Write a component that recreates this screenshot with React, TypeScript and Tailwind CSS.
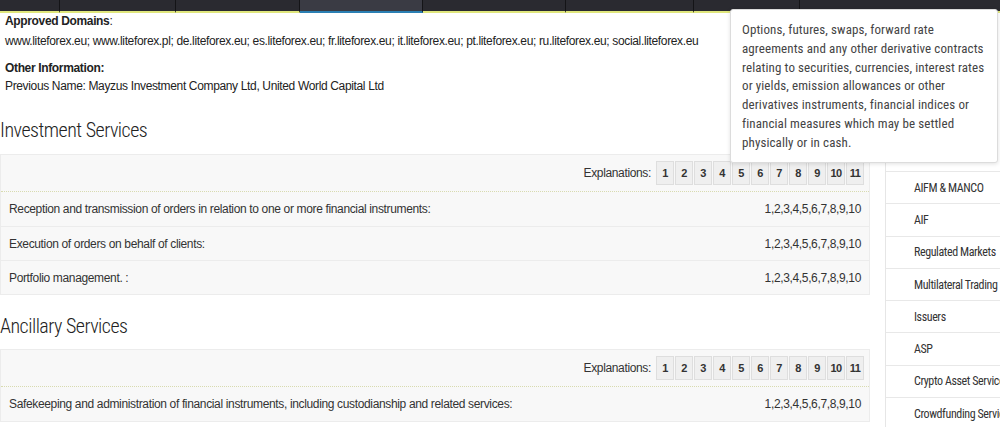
import React from 'react'

const tabs = [
  { w: 'w-[60px]' },
  { w: 'w-[116px]' },
  { w: 'w-[124px]' },
  { w: 'w-[123px]', active: true },
  { w: 'w-[143px]' },
  { w: 'w-[128px]' },
  { w: 'w-[106px]' },
  { w: 'flex-1', last: true },
]

const sideItems = [
  'AIFM & MANCO',
  'AIF',
  'Regulated Markets',
  'Multilateral Trading',
  'Issuers',
  'ASP',
  'Crypto Asset Services',
  'Crowdfunding Services',
]

const arial = "font-['Liberation_Sans',Arial,sans-serif] tracking-[-0.35px]"

function Explanations() {
  return (
    <div className="flex h-[37px] items-center justify-end border-b border-dotted border-[#d8dbb0] pr-[5px]">
      <span className="mr-[5px] text-[12px] text-[#333]">Explanations:</span>
      <div className="flex gap-px">
        {Array.from({ length: 11 }, (_, i) => (
          <span
            key={i}
            className="flex h-[24px] w-[18px] items-center justify-center border border-[#dedede] bg-[#efefef] text-[11px] font-bold tracking-[-0.5px] text-[#333]"
          >
            {i + 1}
          </span>
        ))}
      </div>
    </div>
  )
}

function ServiceTable({ rows }: { rows: string[] }) {
  return (
    <div className="border border-[#ececec] bg-[#f8f8f8]">
      <Explanations />
      {rows.map((r, i) => (
        <div
          key={r}
          className={`flex h-[34px] items-center justify-between px-[8px] text-[12px] text-[#333] ${i > 0 ? 'border-t border-[#ececec]' : ''}`}
        >
          <span>{r}</span>
          <span>1,2,3,4,5,6,7,8,9,10</span>
        </div>
      ))}
    </div>
  )
}

export default function App() {
  return (
    <div className={`relative h-[427px] w-[1000px] overflow-hidden bg-white ${arial}`}>
      <nav className="flex h-[13px] bg-[#2a2a30]">
        {tabs.map((t, i) => (
          <div
            key={i}
            className={`${t.w} h-[13px] border-b-2 ${t.last ? '' : 'border-r border-r-[#141417]'} ${
              t.active ? 'border-b-[#2b7fb3] bg-[#3a3b44]' : 'border-b-[#dfe67c]'
            }`}
          />
        ))}
      </nav>

      <div className="flex">
        <main className="w-[870px] shrink-0">
          <div className="px-[5px] text-[12px] leading-[16px] text-[#222]">
            <p>
              <b>Approved Domains</b>:
            </p>
            <p className="mt-[4px] whitespace-nowrap">
              www.liteforex.eu; www.liteforex.pl; de.liteforex.eu; es.liteforex.eu; fr.liteforex.eu; it.liteforex.eu;
              pt.liteforex.eu; ru.liteforex.eu; social.liteforex.eu
            </p>
            <p className="mt-[11px] font-bold">Other Information:</p>
            <p className="mt-[2px]">Previous Name: Mayzus Investment Company Ltd, United World Capital Ltd</p>
          </div>

          <h2 className="mt-[24px] font-['Roboto',sans-serif] text-[20px] font-light leading-[24px] tracking-[-0.5px] text-[#222] [font-stretch:85%]">
            Investment Services
          </h2>
          <div className="mt-[12px]">
            <ServiceTable
              rows={[
                'Reception and transmission of orders in relation to one or more financial instruments:',
                'Execution of orders on behalf of clients:',
                'Portfolio management. :',
              ]}
            />
          </div>

          <h2 className="mt-[19px] font-['Roboto',sans-serif] text-[20px] font-light leading-[24px] tracking-[-0.5px] text-[#222] [font-stretch:85%]">
            Ancillary Services
          </h2>
          <div className="mt-[11px]">
            <ServiceTable
              rows={['Safekeeping and administration of financial instruments, including custodianship and related services:']}
            />
          </div>
        </main>

        <aside className="ml-[15px] w-[130px] shrink-0 border-l border-[#e6e6e6] bg-white font-['Roboto',sans-serif] tracking-[-0.4px] [font-stretch:85%]">
          <div className="h-[159px] border-b border-[#e8e8e8]" />
          {sideItems.map(s => (
            <div
              key={s}
              className="flex h-[32.3px] items-center whitespace-nowrap border-b border-[#e8e8e8] pl-[28px] text-[12px] text-[#333]"
            >
              {s}
            </div>
          ))}
        </aside>
      </div>

      <div className="absolute left-[730px] top-[9px] h-[154px] w-[268px] rounded-[3px] border border-[#dcdcdc] bg-white pl-[11px] pt-[11px] font-['Roboto',sans-serif] text-[13px] leading-[18.8px] tracking-[0.1px] text-[#444] shadow-[0_1px_4px_rgba(0,0,0,0.12)] [font-stretch:85%]">
        <p className="whitespace-nowrap">Options, futures, swaps, forward rate</p>
        <p className="whitespace-nowrap">agreements and any other derivative contracts</p>
        <p className="whitespace-nowrap">relating to securities, currencies, interest rates</p>
        <p className="whitespace-nowrap">or yields, emission allowances or other</p>
        <p className="whitespace-nowrap">derivatives instruments, financial indices or</p>
        <p className="whitespace-nowrap">financial measures which may be settled</p>
        <p className="whitespace-nowrap">physically or in cash.</p>
      </div>
    </div>
  )
}
